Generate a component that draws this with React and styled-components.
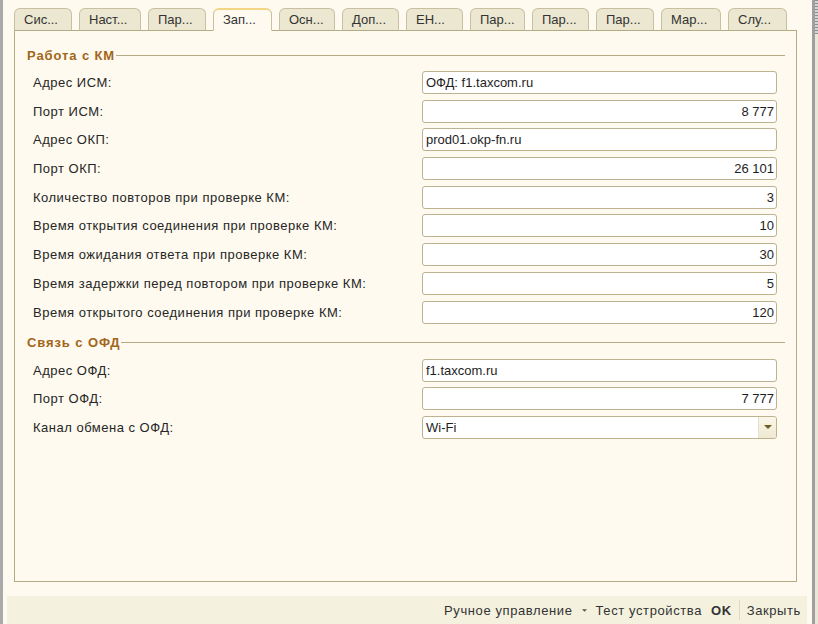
import styled, { createGlobalStyle } from 'styled-components'

const GlobalStyle = createGlobalStyle`
  html, body {
    margin: 0;
    padding: 0;
    background: #fefaef;
  }
  body {
    font-family: "Liberation Sans", Arial, sans-serif;
    font-size: 13px;
    color: #2b2b2b;
  }
`

const Frame = styled.div`
  width: 818px;
  height: 624px;
  display: flex;
  overflow: hidden;
  background: #fefaef;
`

const LeftEdge = styled.div`
  width: 3px;
  background: #aaaaaa;
`

const RightEdge = styled.div`
  width: 3px;
  background: #9f9f9f;
`

const ScrollStrip = styled.div`
  width: 3px;
  background: #ebe7d6;
  display: flex;
  flex-direction: column;
`

const ScrollGrip = styled.div`
  height: 34px;
  background: repeating-linear-gradient(#8f8f8f 0 1px, #d4d4d4 1px 3px);
`

const Main = styled.div`
  flex: 1;
  display: flex;
  flex-direction: column;
`

const TabBar = styled.div`
  display: flex;
  gap: 7px;
  padding: 8px 0 0 11px;
  position: relative;
  z-index: 1;
`

const Tab = styled.div`
  width: ${p => p.$w}px;
  height: 23px;
  box-sizing: border-box;
  padding: ${p => (p.$active ? '2px' : '3px')} 0 0 9px;
  border: 1px solid #c8c0a0;
  border-radius: 6px 6px 0 0;
  background: ${p => (p.$active ? '#fefaef' : '#ece7d1')};
  border-top: ${p => (p.$active ? '2px solid #f4d586' : '1px solid #c8c0a0')};
  border-bottom: ${p => (p.$active ? '1px solid #fefaef' : '1px solid #b4ab85')};
  margin-bottom: -1px;
  white-space: nowrap;
  color: #333;
`

const Panel = styled.div`
  margin-left: 11px;
  width: 783px;
  height: 552px;
  box-sizing: border-box;
  border: 1px solid #b4ab85;
  padding: 16px 11px 0 12px;
  display: flex;
  flex-direction: column;
  gap: 11px;
`

const Section = styled.section`
  display: flex;
  flex-direction: column;
`

const SectionTitle = styled.div`
  display: flex;
  align-items: center;
  height: 16px;
  font-weight: bold;
  letter-spacing: 0.9px;
  color: #a2661a;
  margin-bottom: 8px;

  &::after {
    content: '';
    flex: 1;
    height: 1px;
    background: #b4ab85;
    margin-left: 1px;
  }
`

const Rows = styled.div`
  display: flex;
  flex-direction: column;
  gap: 5.7px;
  padding: 0 8px 0 6px;
`

const Row = styled.div`
  display: grid;
  grid-template-columns: 389px 355px;
  align-items: center;
  height: 23px;
`

const Label = styled.div`
  color: #262626;
  letter-spacing: 0.5px;
  white-space: nowrap;
`

const Field = styled.div`
  height: 23px;
  box-sizing: border-box;
  border: 1px solid #bcb290;
  border-radius: 3px;
  background: #ffffff;
  display: flex;
  align-items: center;
  justify-content: ${p => (p.$right ? 'flex-end' : 'flex-start')};
  padding: 0 2px 0 3px;
  color: #1e1e1e;
  overflow: hidden;
`

const FieldText = styled.span`
  flex: 1;
`

const DropButton = styled.div`
  width: 17px;
  align-self: stretch;
  margin: 0 -2px 0 0;
  border-left: 1px solid #e6e0c8;
  border-radius: 0 2px 2px 0;
  background: linear-gradient(#faf7ea, #efe9d2);
  display: flex;
  align-items: center;
  justify-content: center;
`

const Footer = styled.div`
  margin: auto 5px 0 4px;
  height: 28px;
  background: #f4f2df;
  display: flex;
  align-items: center;
  justify-content: flex-end;
  padding-right: 6px;
  gap: 9px;
  color: #333;
  letter-spacing: 0.6px;
`

const FooterItem = styled.span`
  font-weight: ${p => (p.$bold ? 'bold' : 'normal')};
  display: flex;
  align-items: center;
  gap: 9px;
`

const Divider = styled.span`
  width: 1px;
  height: 20px;
  background: #dedac4;
  margin: 0 -2px;
`

const tabs = [
  ['Сис...', 58], ['Наст...', 62], ['Пар...', 58], ['Зап...', 59], ['Осн...', 56],
  ['Доп...', 57], ['ЕН...', 57], ['Пар...', 55], ['Пар...', 57], ['Пар...', 58],
  ['Мар...', 60], ['Слу...', 59],
]

const kmRows = [
  ['Адрес ИСМ:', 'ОФД: f1.taxcom.ru'],
  ['Порт ИСМ:', '8 777', true],
  ['Адрес ОКП:', 'prod01.okp-fn.ru'],
  ['Порт ОКП:', '26 101', true],
  ['Количество повторов при проверке КМ:', '3', true],
  ['Время открытия соединения при проверке КМ:', '10', true],
  ['Время ожидания ответа при проверке КМ:', '30', true],
  ['Время задержки перед повтором при проверке КМ:', '5', true],
  ['Время открытого соединения при проверке КМ:', '120', true],
]

const ofdRows = [
  ['Адрес ОФД:', 'f1.taxcom.ru'],
  ['Порт ОФД:', '7 777', true],
]

const Arrow = ({ size = 7, color = '#6e5b1e' }) => (
  <svg width={size} height={Math.ceil(size / 2)} viewBox="0 0 8 4">
    <path d="M0 0H8L4 4Z" fill={color} />
  </svg>
)

const FormRow = ({ label, value, right }) => (
  <Row>
    <Label>{label}</Label>
    <Field $right={right}>{value}</Field>
  </Row>
)

export default function App() {
  return (
    <>
      <GlobalStyle />
      <Frame>
        <LeftEdge />
        <Main>
          <TabBar>
            {tabs.map(([t, w], i) => (
              <Tab key={i} $w={w} $active={i === 3}>{t}</Tab>
            ))}
          </TabBar>
          <Panel>
            <Section>
              <SectionTitle>Работа с КМ</SectionTitle>
              <Rows>
                {kmRows.map(([l, v, r]) => (
                  <FormRow key={l} label={l} value={v} right={r} />
                ))}
              </Rows>
            </Section>
            <Section>
              <SectionTitle>Связь с ОФД</SectionTitle>
              <Rows>
                {ofdRows.map(([l, v, r]) => (
                  <FormRow key={l} label={l} value={v} right={r} />
                ))}
                <Row>
                  <Label>Канал обмена с ОФД:</Label>
                  <Field>
                    <FieldText>Wi-Fi</FieldText>
                    <DropButton><Arrow size={8} /></DropButton>
                  </Field>
                </Row>
              </Rows>
            </Section>
          </Panel>
          <Footer>
            <FooterItem>Ручное управление <Arrow size={5} color="#555" /></FooterItem>
            <FooterItem>Тест устройства</FooterItem>
            <FooterItem $bold>OK</FooterItem>
            <Divider />
            <FooterItem>Закрыть</FooterItem>
          </Footer>
        </Main>
        <RightEdge />
        <ScrollStrip><ScrollGrip /></ScrollStrip>
      </Frame>
    </>
  )
}
